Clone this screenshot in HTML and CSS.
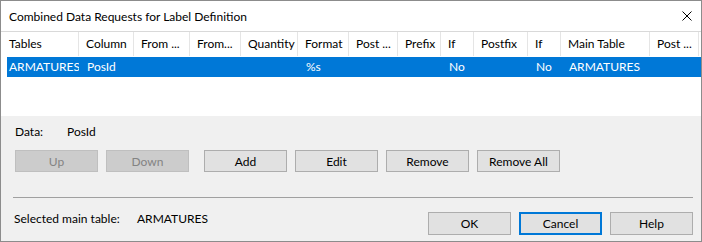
FILE: index.html
```html
<!DOCTYPE html>
<html lang="en">
<head>
  <meta charset="UTF-8">
  <title>Combined Data Requests for Label Definition</title>
  <link rel="stylesheet" href="styles.css">
</head>
<body>
  <div class="dialog">
    <div class="titlebar">
      <span class="title">Combined Data Requests for Label Definition</span>
      <svg class="close" width="10" height="10" viewBox="0 0 10 10">
        <path d="M0.5 0.5 L9.5 9.5 M9.5 0.5 L0.5 9.5" stroke="#000" stroke-width="1" fill="none"/>
      </svg>
    </div>

    <div class="list">
      <div class="list-head">
        <div class="col">Tables</div>
        <div class="col">Column</div>
        <div class="col">From ...</div>
        <div class="col">From...</div>
        <div class="col">Quantity</div>
        <div class="col">Format</div>
        <div class="col">Post ...</div>
        <div class="col">Prefix</div>
        <div class="col">If</div>
        <div class="col">Postfix</div>
        <div class="col">If</div>
        <div class="col">Main Table</div>
        <div class="col">Post ...</div>
      </div>
      <div class="list-row selected">
        <div class="cell">ARMATURES</div>
        <div class="cell">PosId</div>
        <div class="cell"></div>
        <div class="cell"></div>
        <div class="cell"></div>
        <div class="cell">%s</div>
        <div class="cell"></div>
        <div class="cell"></div>
        <div class="cell">No</div>
        <div class="cell"></div>
        <div class="cell">No</div>
        <div class="cell">ARMATURES</div>
        <div class="cell"></div>
      </div>
    </div>

    <div class="panel">
      <div class="info">
        <span class="label data-label">Data:</span>
        <span class="value">PosId</span>
      </div>
      <div class="buttons">
        <button class="btn" disabled>Up</button>
        <button class="btn" disabled>Down</button>
        <button class="btn spaced">Add</button>
        <button class="btn">Edit</button>
        <button class="btn">Remove</button>
        <button class="btn">Remove All</button>
      </div>
      <div class="separator"></div>
      <div class="footer">
        <div class="info main-table">
          <span class="label main-label">Selected main table:</span>
          <span class="value">ARMATURES</span>
        </div>
        <div class="actions">
          <button class="btn tall">OK</button>
          <button class="btn tall default">Cancel</button>
          <button class="btn tall">Help</button>
        </div>
      </div>
    </div>
  </div>
</body>
</html>
```
FILE: styles.css
```css
body {
  margin: 0;
  font-family: Lato, "Liberation Sans", sans-serif;
  font-size: 12px;
  color: #000;
}
.dialog {
  width: 702px;
  height: 242px;
  box-sizing: border-box;
  border: 1px solid #8c8c8c;
  background: #f0f0f0;
  display: flex;
  flex-direction: column;
}
.titlebar {
  height: 30px;
  flex: none;
  background: #fff;
  display: flex;
  align-items: center;
  padding: 0 9px 0 8px;
}
.title {
  flex: 1;
  padding-top: 1px;
}
.close {
  display: block;
}

/* list view */
.list {
  height: 84px;
  flex: none;
  background: #fff;
  border-top: 1px solid #d9d9d9;
}
.list-head,
.list-row {
  display: grid;
  grid-template-columns: 78px 55px 56px 51px 57px 51px 49px 43px 33px 54px 33px 89px 49px;
}
.list-head {
  height: 24px;
  line-height: 24px;
}
.col {
  padding-left: 7px;
  border-right: 1px solid #e5e5e5;
  white-space: nowrap;
  overflow: hidden;
}
.col:first-child {
  padding-left: 8px;
}
.list-row {
  margin: 1px 0 0 6px;
  height: 20px;
  line-height: 20px;
  grid-template-columns: 72px 55px 56px 51px 57px 51px 49px 43px 33px 54px 33px 89px 49px;
}
.selected {
  background: #0078d7;
  color: #fff;
}
.cell {
  padding-left: 8px;
  white-space: nowrap;
  overflow: hidden;
}
.cell:first-child {
  padding-left: 2px;
}

/* lower panel */
.panel {
  flex: 1;
  padding: 8px 8px 0 14px;
}
.info {
  display: flex;
  height: 16px;
  line-height: 16px;
}
.data-label {
  width: 52px;
}
.main-label {
  width: 123px;
}
.buttons {
  display: flex;
  gap: 8px;
  margin-top: 10px;
}
.btn {
  width: 83px;
  height: 22px;
  box-sizing: border-box;
  background: #e1e1e1;
  border: 1px solid #adadad;
  font: inherit;
  color: #000;
  padding: 0;
}
.btn:disabled {
  background: #cccccc;
  border-color: #bfbfbf;
  color: #838383;
}
.btn.spaced {
  margin-left: 7px;
}
.separator {
  margin: 25px 0 0 -2px;
  border-top: 1px solid #a0a0a0;
}
.footer {
  display: flex;
  justify-content: space-between;
  margin-top: 14px;
}
.main-table {
  margin: -1px 0 0 -1px;
}
.actions {
  display: flex;
  gap: 8px;
}
.btn.tall {
  height: 23px;
}
.btn.default {
  border: 2px solid #0078d7;
}
```
